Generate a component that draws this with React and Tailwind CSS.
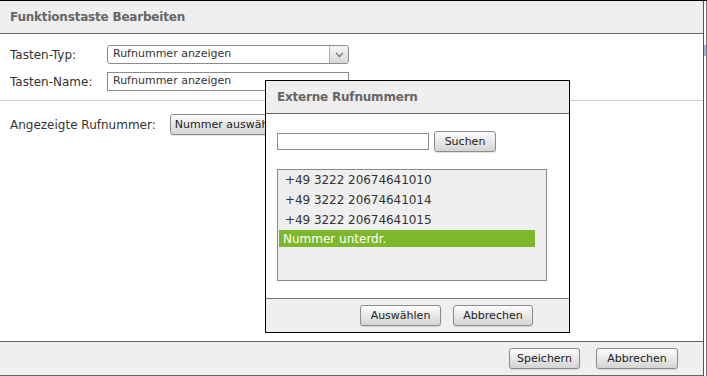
import React from 'react'

const numbers = ['+49 3222 20674641010', '+49 3222 20674641014', '+49 3222 20674641015']

function Btn({ children, className = '' }) {
  return (
    <button
      className={`flex h-[21px] items-center justify-center rounded-[3px] border border-[#8c8c8c] bg-linear-to-b from-[#fdfdfd] to-[#d4d4d4] text-[11px] leading-none text-[#222] shadow-[0_1px_1px_rgba(0,0,0,0.12)] ${className}`}
    >
      {children}
    </button>
  )
}

function Chevron() {
  return (
    <svg width="9" height="6" viewBox="0 0 9 6" fill="none">
      <path d="M1 1l3.5 3.5L8 1" stroke="#777" strokeWidth="1.3" />
    </svg>
  )
}

export default function App() {
  return (
    <div className="relative flex h-[376px] w-[707px] overflow-hidden bg-white font-['DejaVu_Sans',sans-serif] text-[#333]">
      {/* Main panel */}
      <div className="flex w-[704px] flex-col border-t border-r border-t-black border-r-[#555]">
        <div className="flex h-[33px] shrink-0 items-center border-b border-[#666] bg-[#efefef] px-[10px] text-[12px] font-bold tracking-[-0.2px] text-[#666]">
          Funktionstaste Bearbeiten
        </div>

        <div className="flex flex-col gap-[8px] px-[10px] pt-[11px] pb-[9px] text-[12px]">
          <div className="flex items-center">
            <span className="w-[97px]">Tasten-Typ:</span>
            <div className="flex h-[19px] w-[242px] rounded-[3px] border border-[#8c8c8c] bg-white">
              <span className="flex flex-1 items-center pl-[5px] text-[11px]">Rufnummer anzeigen</span>
              <span className="flex w-[19px] items-center justify-center rounded-r-[3px] border-l border-[#b0b0b0] bg-linear-to-b from-[#f6f6f6] to-[#d8d8d8]">
                <Chevron />
              </span>
            </div>
          </div>
          <div className="flex items-center">
            <span className="w-[97px]">Tasten-Name:</span>
            <div className="flex h-[19px] w-[242px] items-center border border-[#8c8c8c] pl-[5px] text-[11px]">
              Rufnummer anzeigen
            </div>
          </div>
        </div>

        <div className="border-t border-[#cfcfcf]" />

        <div className="flex items-center px-[10px] pt-[13px] text-[12px]">
          <span className="w-[160px]">Angezeigte Rufnummer:</span>
          <Btn className="w-[120px]">Nummer auswählen</Btn>
        </div>

        <div className="flex-1" />

        <div className="flex h-[35px] shrink-0 items-center justify-end gap-[16px] border-y border-[#666] bg-[#efefef] pr-[25px]">
          <Btn className="w-[71px]">Speichern</Btn>
          <Btn className="w-[82px]">Abbrechen</Btn>
        </div>
      </div>

      {/* Right edge strip */}
      <div className="flex w-[3px] flex-col border-t border-r border-t-black border-r-[#777]">
        <div className="mt-[44px] h-[11px] w-[2px] bg-[#8fb8e2]" />
      </div>

      {/* Dialog */}
      <div className="absolute top-[80px] left-[265px] flex h-[253px] w-[305px] flex-col border border-black bg-white">
        <div className="flex h-[33px] shrink-0 items-center border-b border-[#666] bg-[#efefef] px-[11px] text-[12px] font-bold tracking-[-0.2px] text-[#666]">
          Externe Rufnummern
        </div>

        <div className="flex flex-1 flex-col px-[11px] pt-[17px]">
          <div className="flex items-center">
            <div className="h-[17px] w-[152px] border border-[#8c8c8c] bg-white" />
            <Btn className="ml-[5px] w-[62px]">Suchen</Btn>
          </div>

          <div className="mt-[17px] h-[112px] w-[270px] border border-[#8a8a8a] bg-[#efefef] pl-[1px]">
            {numbers.map((n) => (
              <div key={n} className="flex h-[20px] w-[256px] items-center pl-[6px] text-[12px] tracking-[-0.05px]">
                {n}
              </div>
            ))}
            <div className="flex h-[17px] w-[256px] items-center bg-[#7db82b] pl-[4px] text-[12px] text-white">
              Nummer unterdr.
            </div>
          </div>
        </div>

        <div className="flex h-[34px] shrink-0 items-center justify-end gap-[12px] border-t border-[#777] bg-[#efefef] pr-[36px]">
          <Btn className="w-[81px]">Auswählen</Btn>
          <Btn className="w-[80px]">Abbrechen</Btn>
        </div>
      </div>
    </div>
  )
}
